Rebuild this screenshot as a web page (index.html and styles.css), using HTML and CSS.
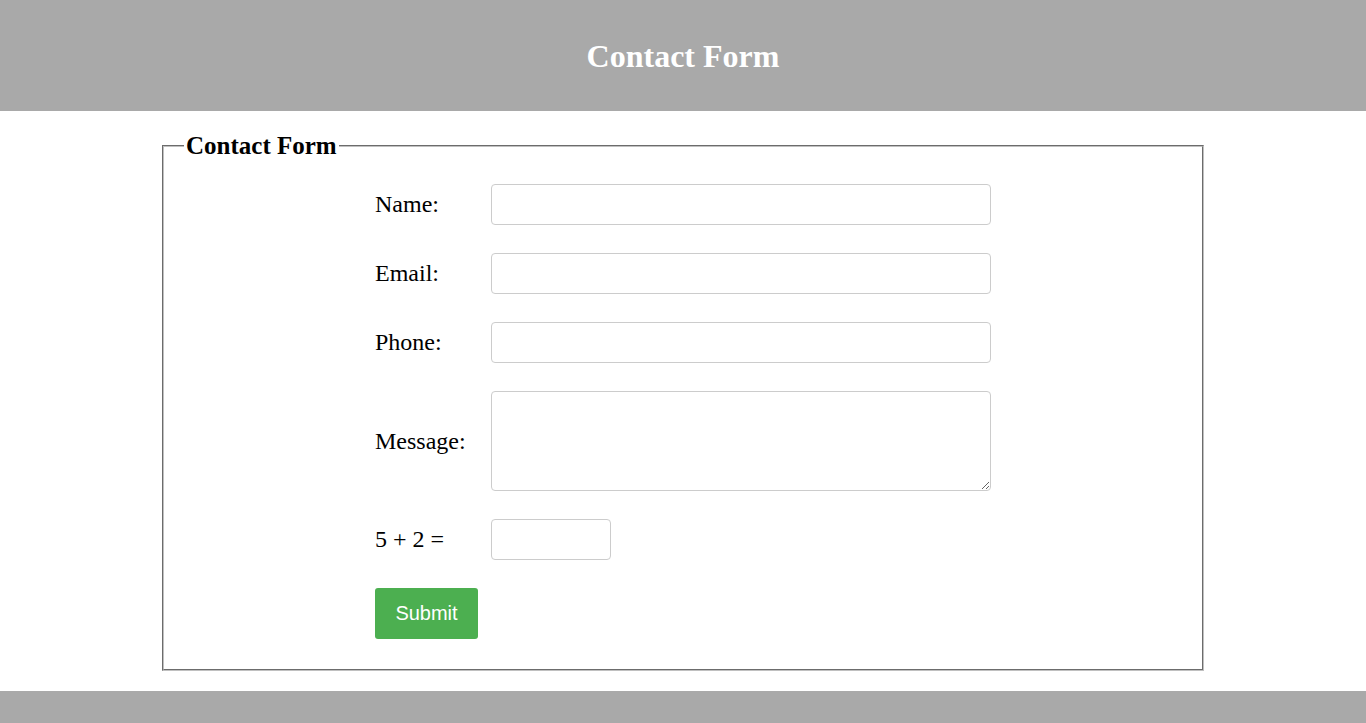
FILE: index.html
```html
<!DOCTYPE html>
<html lang="en">
<head>
    <meta charset="UTF-8">
    <meta name="viewport" content="width=device-width, initial-scale=1.0">
    <title>Contact Form</title>
    <link rel="stylesheet" href="styles.css">
</head>
<body>
    <header class="site-header">
        <h1>Contact Form</h1>
    </header>

    <fieldset class="contact-box">
        <legend>Contact Form</legend>
        <form class="contact-form">
            <label for="name">Name:</label>
            <input type="text" id="name" name="name">

            <label for="email">Email:</label>
            <input type="email" id="email" name="email">

            <label for="phone">Phone:</label>
            <input type="tel" id="phone" name="phone">

            <label for="message">Message:</label>
            <textarea id="message" name="message"></textarea>

            <label for="captcha">5 + 2 =</label>
            <input type="text" id="captcha" name="captcha" class="captcha">

            <button type="submit">Submit</button>
        </form>
    </fieldset>

    <footer class="site-footer"></footer>
</body>
</html>
```

FILE: styles.css
```css
body {
    margin: 0;
    font-family: "Liberation Serif", "Times New Roman", serif;
    color: #000;
    background: #fff;
}
.site-header {
    background-color: #a9a9a9;
    height: 111px;
    display: flex;
    align-items: center;
    justify-content: center;
}
.site-header h1 {
    margin: 0;
    padding-top: 2px;
    color: #fff;
    font-size: 32px;
    font-weight: bold;
}
.contact-box {
    box-sizing: border-box;
    width: 1042px;
    margin: 21px auto 20px;
    padding: 24px 20px 30px 20px;
    border: 2px groove #c0c0c0;
}
.contact-box legend {
    font-size: 25px;
    font-weight: bold;
    padding: 0 2px;
}
.contact-form {
    width: 616px;
    margin: 0 auto;
    display: grid;
    grid-template-columns: 116px 500px;
    row-gap: 28px;
    align-items: center;
}
.contact-form label {
    font-size: 24px;
}
.contact-form input,
.contact-form textarea {
    box-sizing: border-box;
    width: 500px;
    height: 41px;
    border: 1px solid #ccc;
    border-radius: 4px;
    padding: 8px;
    font-size: 16px;
}
.contact-form textarea {
    height: 100px;
    resize: vertical;
}
.contact-form input.captcha {
    width: 120px;
}
.contact-form button {
    grid-column: 1;
    width: 103px;
    height: 51px;
    background-color: #4caf50;
    color: #fff;
    border: none;
    border-radius: 3px;
    font-family: "Liberation Sans", Arial, sans-serif;
    font-size: 20px;
    cursor: pointer;
}
.site-footer {
    background-color: #a9a9a9;
    height: 40px;
}
```
